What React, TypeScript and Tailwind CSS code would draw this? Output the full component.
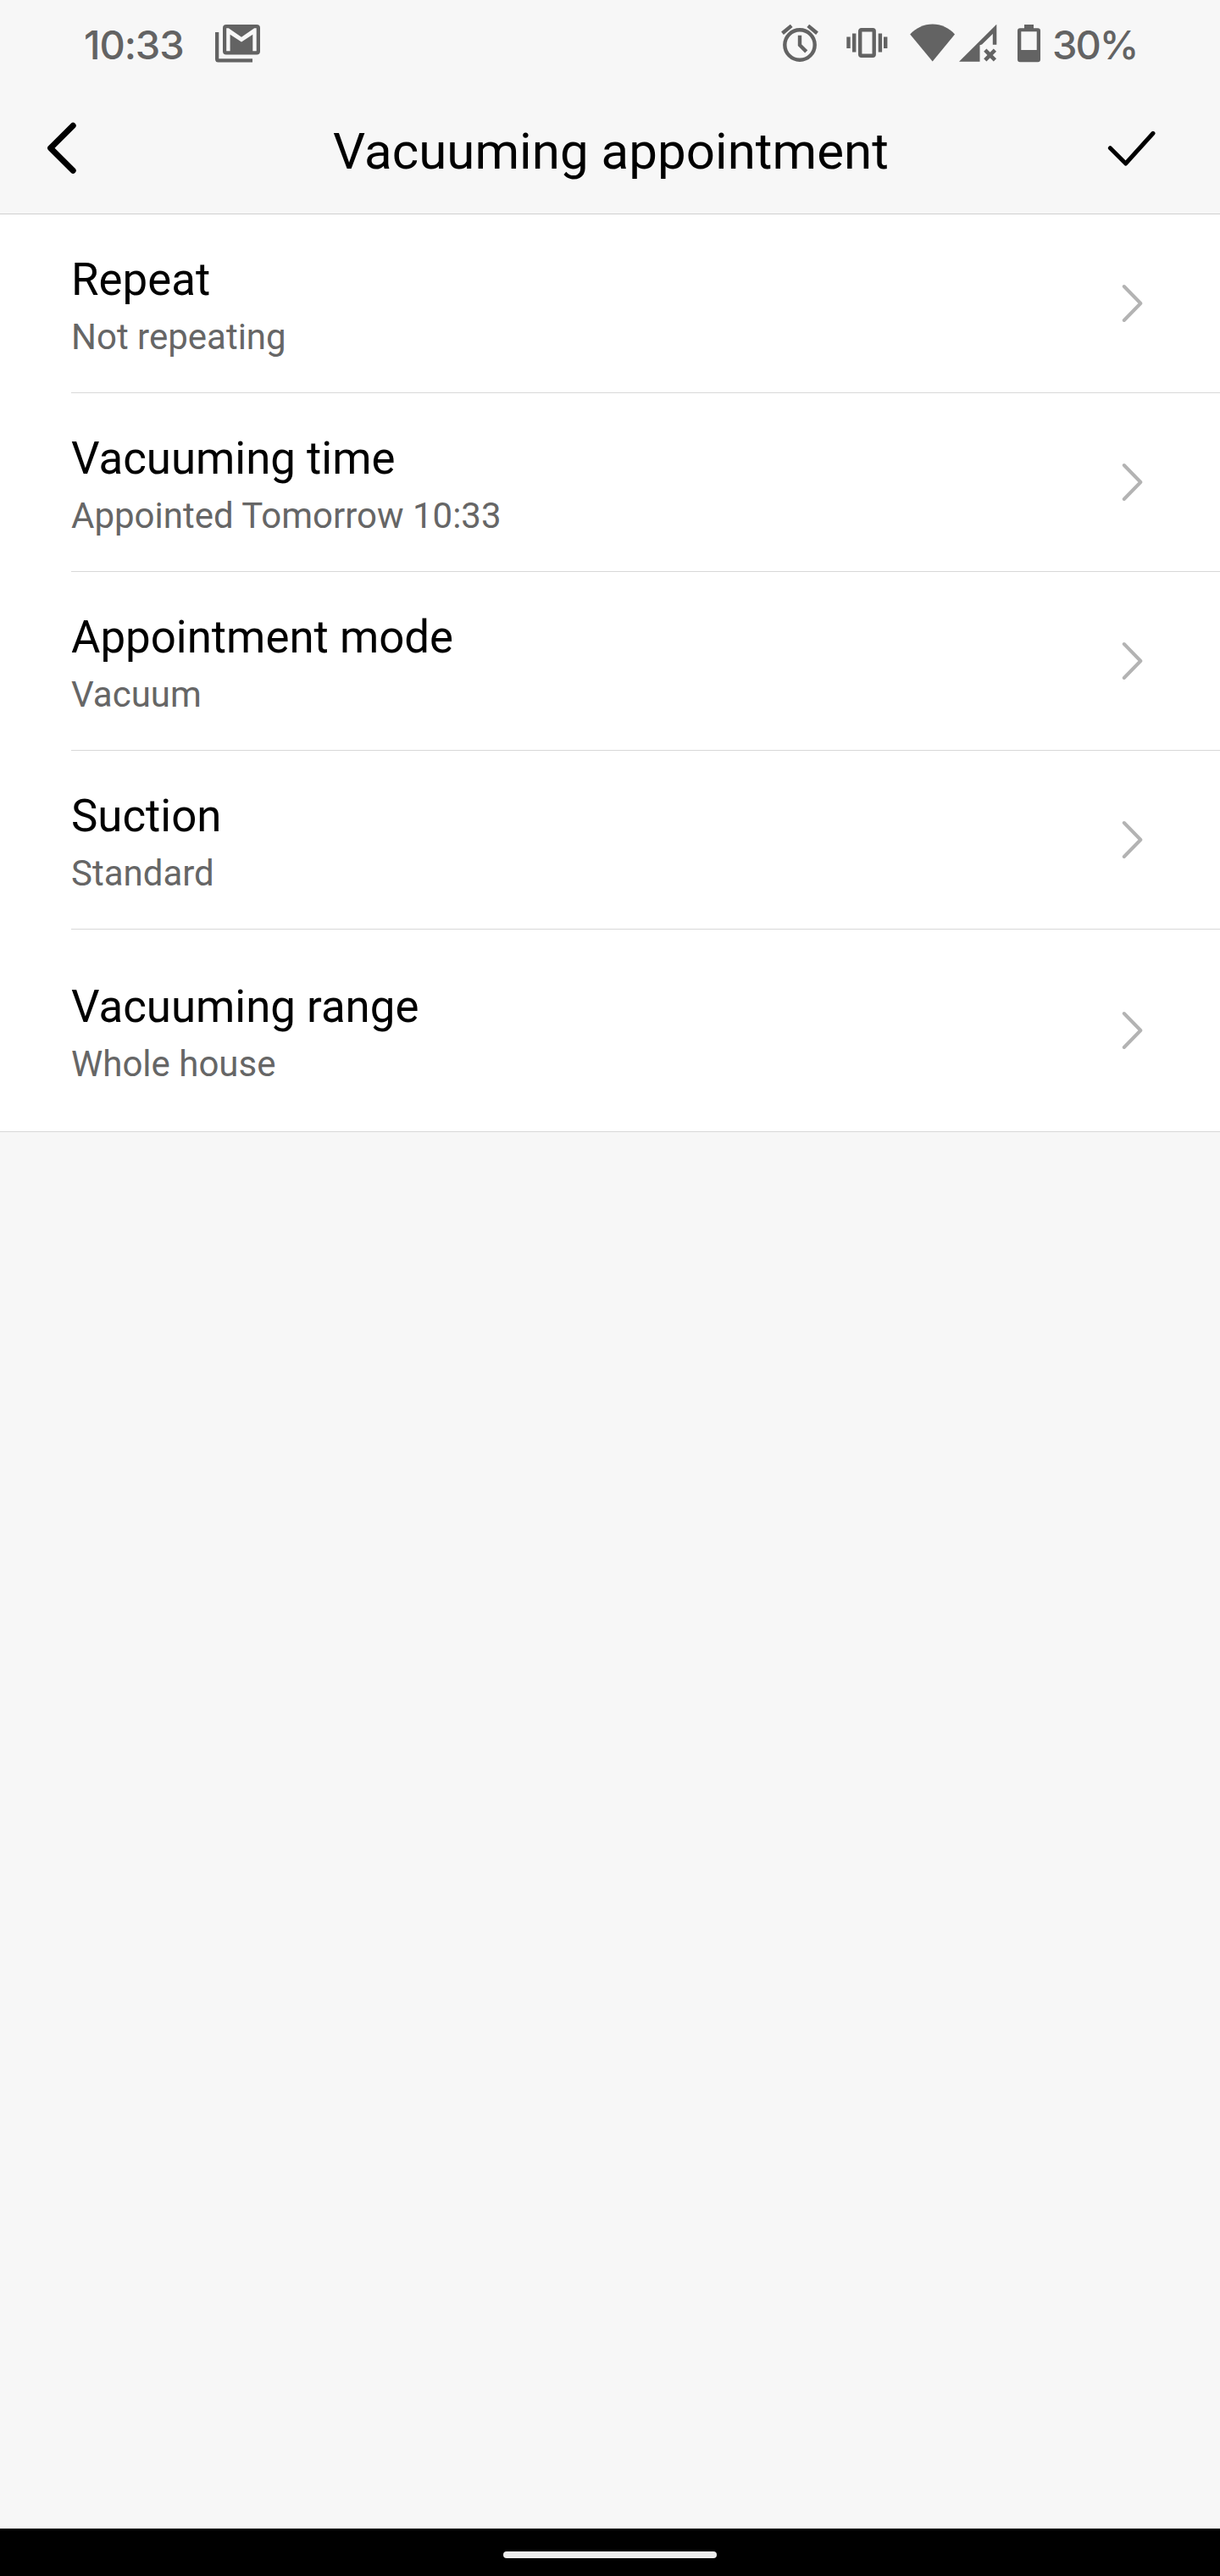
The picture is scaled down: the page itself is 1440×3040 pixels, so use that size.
import React, { useState } from 'react';

interface SettingRow {
  id: string;
  title: string;
  value: string;
}

const SETTINGS: SettingRow[] = [
  { id: 'repeat', title: 'Repeat', value: 'Not repeating' },
  { id: 'time', title: 'Vacuuming time', value: 'Appointed Tomorrow 10:33' },
  { id: 'mode', title: 'Appointment mode', value: 'Vacuum' },
  { id: 'suction', title: 'Suction', value: 'Standard' },
  { id: 'range', title: 'Vacuuming range', value: 'Whole house' },
];

const MailStackIcon = () => (
  <svg width="54" height="46" viewBox="0 0 54 46" fill="none">
    <path d="M0 9h4.3v31.2h39.7v4.3H3.5A3.5 3.5 0 0 1 0 41z" fill="#636363" />
    <rect x="9" y="0" width="44" height="35.6" rx="4" fill="#636363" />
    <path d="M13.2 31.2V4.3h2.6L31 14.8 46.2 4.3h2.5v26.9h-4.4V11.8L31 20.5 17.6 11.8v19.4z" fill="#f7f7f7" />
  </svg>
);

const AlarmIcon = () => (
  <svg width="44" height="46" viewBox="0 0 44 46" fill="none" stroke="#636363" strokeWidth="4.4">
    <circle cx="22" cy="24" r="17.7" />
    <path d="M1.5 10.2 12.2 1.4M42.5 10.2 31.8 1.4" />
    <path d="M22 12.8v11.4l7.7 7.7" />
  </svg>
);

const VibrateIcon = () => (
  <svg width="50" height="46" viewBox="0 0 50 46" fill="#636363">
    <path d="M1.3 14.5h4.4V28H1.3zM8 10.5h4.4v22H8zM38.7 10.5h4.4v22h-4.4zM45 14.5h4.4V28H45z" />
    <rect x="17.2" y="6.2" width="16.5" height="30.6" rx="1.5" fill="none" stroke="#636363" strokeWidth="4.4" />
  </svg>
);

const WifiIcon = () => (
  <svg width="54" height="46" viewBox="0 0 54 46" fill="#636363" className="overflow-visible">
    <path d="M26.7 43.5.2 11.4C7 4.2 16.5-.5 26.7-.5S46.4 4.2 53 11.4z" />
  </svg>
);

const SignalIcon = () => (
  <svg width="46" height="46" viewBox="0 0 46 46" fill="#636363">
    <path d="M0 43.7 44.3-.3v24h-4.5V11L27 23.5l-2.5.8v19.4z" />
    <path d="m30.8 30.2 11.6 11.6M42.4 30.2 30.8 41.8" stroke="#636363" strokeWidth="4.6" />
  </svg>
);

const BatteryIcon = () => (
  <svg width="28" height="46" viewBox="0 0 28 46" fill="#636363">
    <path fillRule="evenodd" d="M8 0h11v4.2h5a3 3 0 0 1 3 3v34.1a3 3 0 0 1-3 3H3a3 3 0 0 1-3-3V7.2a3 3 0 0 1 3-3h5zM4.3 8.3V30h18.4V8.3z" />
  </svg>
);

const StatusBar = () => (
  <div className="flex h-[112px] items-start justify-between px-[98px] text-[#636363]">
    <div className="flex items-start">
      <span className="mt-[25px] w-[156px] pl-px font-['Inter',sans-serif] text-[47px] font-medium leading-[56px] tracking-[-1.1px]">10:33</span>
      <div className="mt-[29px]"><MailStackIcon /></div>
    </div>
    <div className="flex items-start">
      <div className="mt-[29px] mr-[32px]"><AlarmIcon /></div>
      <div className="mt-[29px] mr-[26px]"><VibrateIcon /></div>
      <div className="mt-[29px] mr-[4px]"><WifiIcon /></div>
      <div className="mt-[29px] mr-[23px]"><SignalIcon /></div>
      <div className="mt-[29px] mr-[13px]"><BatteryIcon /></div>
      <span className="mt-[25px] w-[100px] whitespace-nowrap font-['Inter',sans-serif] text-[47px] font-medium leading-[56px] tracking-[-2px]">30%</span>
    </div>
  </div>
);

const Header = () => (
  <header className="grid h-[141px] grid-cols-[1fr_auto_1fr] items-start border-b border-[#d0d0d0] pl-14 pr-[54px]">
    <button className="mt-[30px] justify-self-start">
      <svg width="36" height="66" viewBox="0 0 36 66" fill="none" stroke="#000" strokeWidth="7" strokeLinecap="round" strokeLinejoin="round">
        <path d="M30.2 6.2 3.6 32.7l26.6 26.6" />
      </svg>
    </button>
    <h1 className="mt-[32px] text-[60px] leading-[70px] tracking-[0.05px] text-black">Vacuuming appointment</h1>
    <button className="mt-[40px] mr-[22px] justify-self-end">
      <svg width="58" height="46" viewBox="0 0 58 46" fill="none" stroke="#000" strokeWidth="5" strokeLinecap="round" strokeLinejoin="round">
        <path d="M4.4 22.7 22.7 41 55 5.3" />
      </svg>
    </button>
  </header>
);

const Row = ({ row, last, onSelect }: { row: SettingRow; last: boolean; onSelect: () => void }) => (
  <button
    onClick={onSelect}
    className={`flex items-center justify-between pr-[91px] text-left ${last ? 'h-[238px] w-full pl-[84px]' : 'ml-[84px] h-[211px] w-[1356px] border-b border-[#d8d8d8]'}`}
  >
    <div className="flex flex-col pt-[6px]">
      <span className="text-[52.8px] leading-[62px] text-black">{row.title}</span>
      <span className="mt-3 text-[42px] leading-[50px] text-[#666666]">{row.value}</span>
    </div>
    <svg width="26" height="46" viewBox="0 0 26 46" fill="none" stroke="#b3b3b3" strokeWidth="4" strokeLinecap="round" strokeLinejoin="round">
      <path d="M3.8 3 23.3 23 3.8 43" />
    </svg>
  </button>
);

const App: React.FC = () => {
  const [, setActiveRow] = useState<string | null>(null);

  return (
    <div className="flex h-[3040px] w-[1440px] flex-col overflow-hidden bg-[#f7f7f7] font-['Roboto',sans-serif]">
      <StatusBar />
      <Header />

      {/* Settings list */}
      <main className="flex flex-col border-b border-[#d8d8d8] bg-white">
        {SETTINGS.map((row, idx) => (
          <Row key={row.id} row={row} last={idx === SETTINGS.length - 1} onSelect={() => setActiveRow(row.id)} />
        ))}
      </main>

      {/* Gesture bar */}
      <div className="mt-auto flex h-14 items-start justify-center bg-black pt-[27px]">
        <div className="h-2 w-[252px] rounded-full bg-[#ececec]" />
      </div>
    </div>
  );
};

export default App;
